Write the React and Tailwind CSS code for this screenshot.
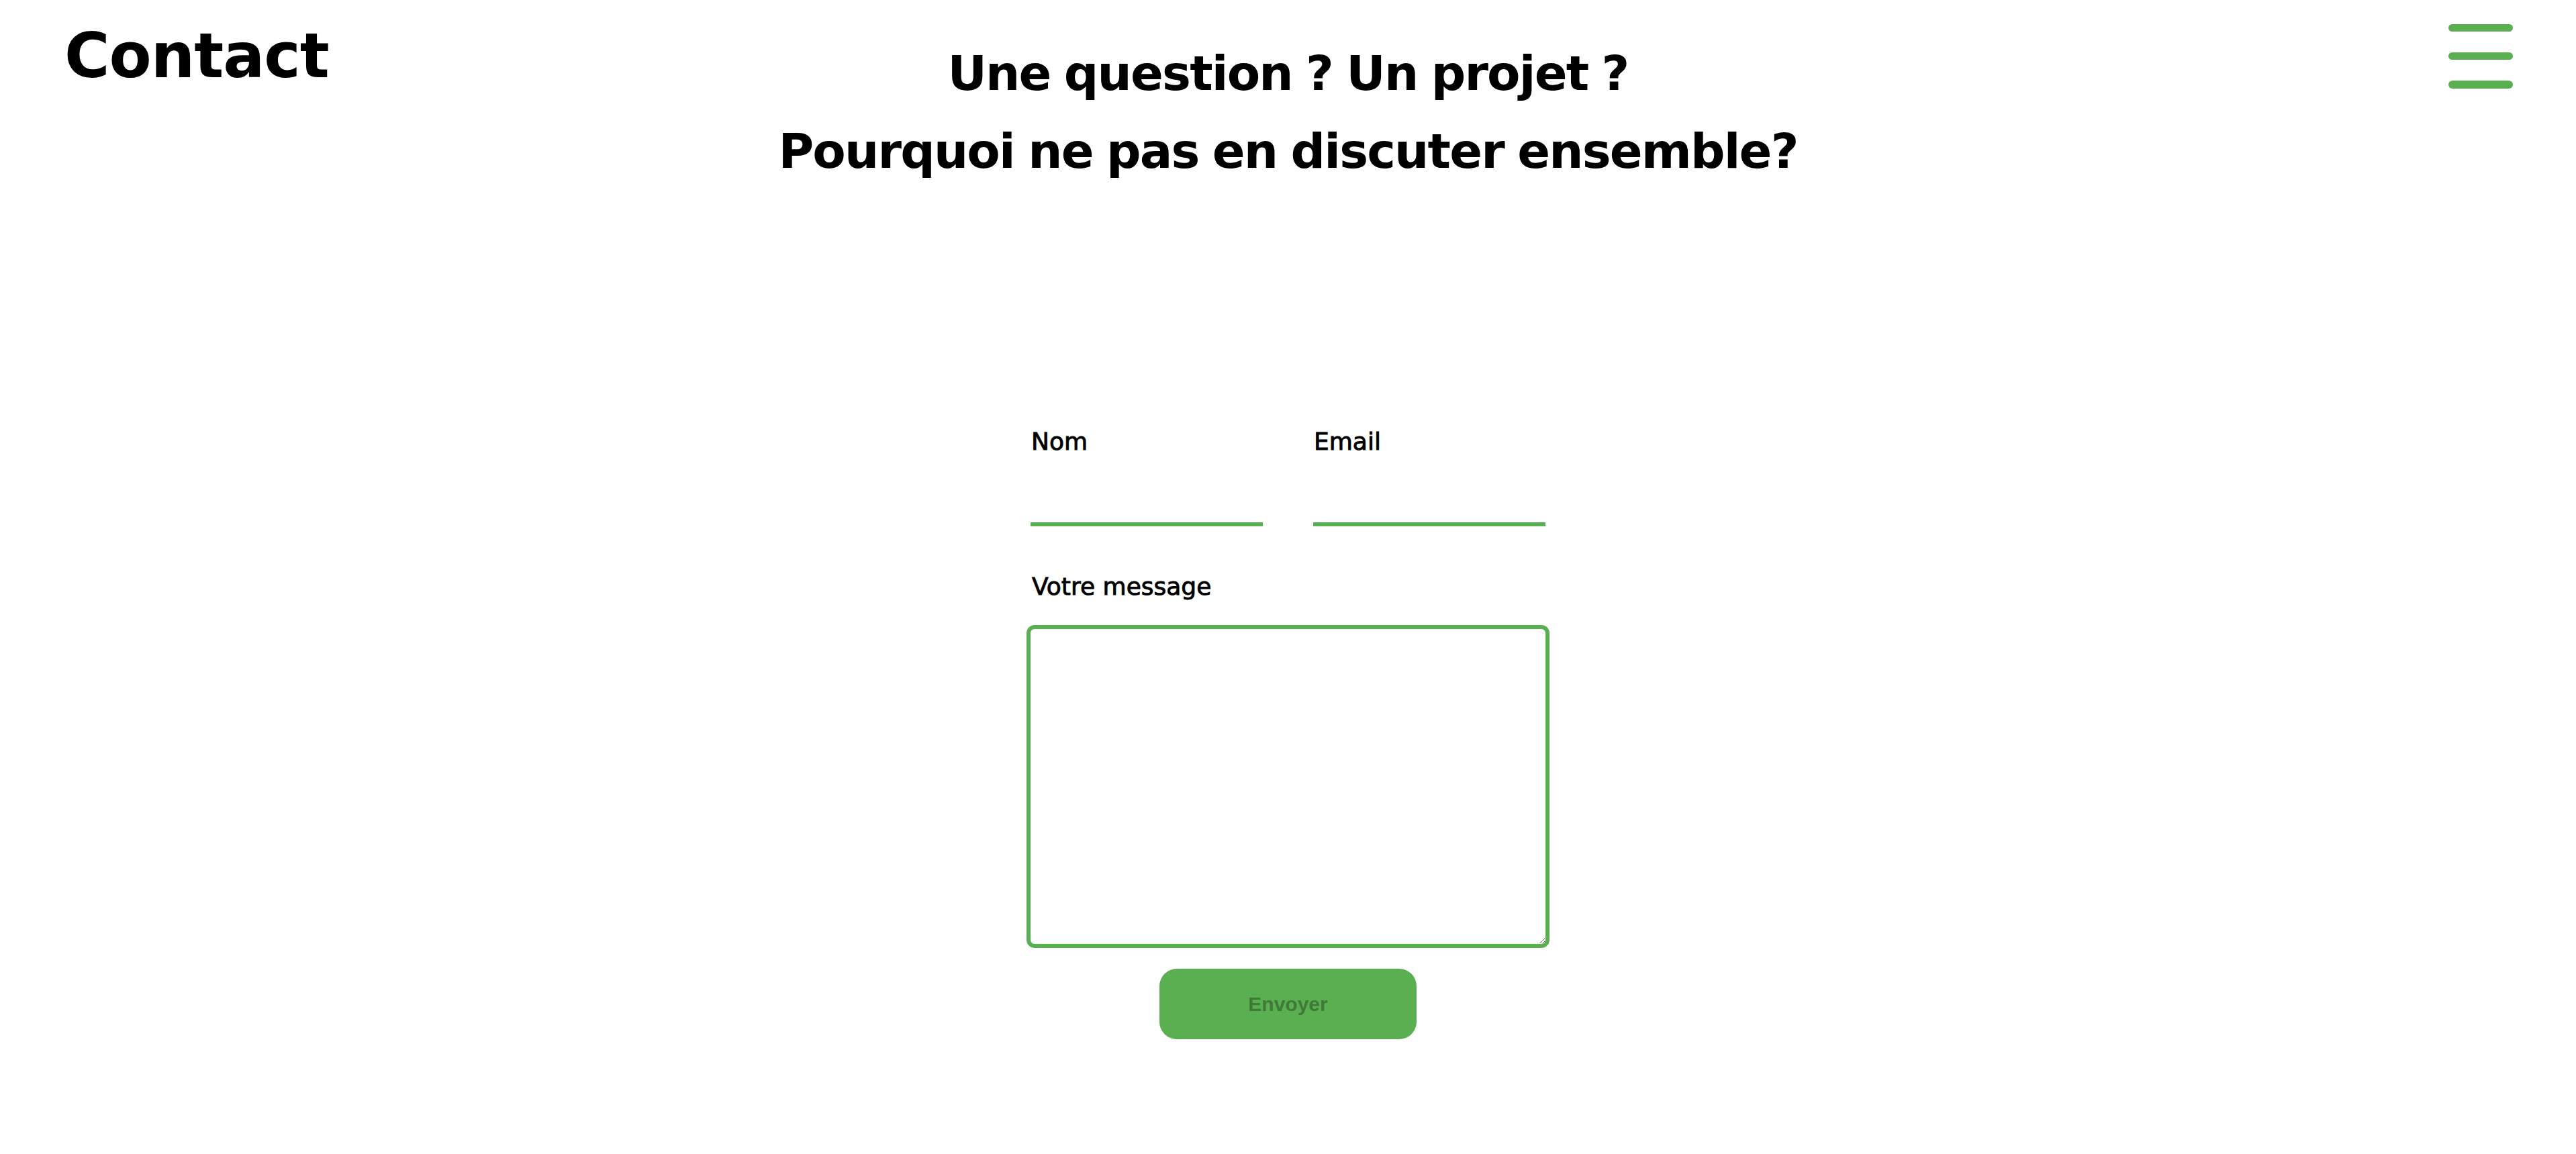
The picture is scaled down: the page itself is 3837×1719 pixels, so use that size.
import React from "react";

export default function App() {
  return (
    <div className="min-h-screen w-full bg-white text-black font-['DejaVu_Sans',sans-serif]">
      <header className="grid grid-cols-[1fr_auto_1fr] items-start">
        <h1 className="ml-[96px] mt-[38px] text-[92px] leading-[92px] font-bold tracking-[-1px]">
          Contact
        </h1>
        <h2 className="mt-[51px] text-center text-[72px] leading-[116px] font-bold tracking-[-1.8px] [word-spacing:-3px]">
          Une question ? Un projet ?
          <br />
          Pourquoi ne pas en discuter ensemble?
        </h2>
        <div className="justify-self-end mr-[94px] mt-[36px] flex w-[96px] flex-col gap-[31px]">
          <span className="block h-[11px] w-full rounded-full bg-[#5aaf50]" />
          <span className="block h-[11px] w-full rounded-full bg-[#5aaf50]" />
          <span className="block h-[12px] w-full rounded-full bg-[#5aaf50]" />
        </div>
      </header>

      <form className="mx-auto mt-[355px] flex w-[779px] flex-col items-center" onSubmit={(e) => e.preventDefault()}>
        <div className="flex w-full gap-[75px] px-[6px]">
          <div className="flex w-[346px] flex-col">
            <label className="pl-[1px] text-[36px] leading-[40px] [-webkit-text-stroke:0.9px_black]">Nom</label>
            <input
              type="text"
              className="mt-[46px] h-[60px] w-full border-0 border-b-[6px] border-[#5aaf50] bg-transparent outline-none"
            />
          </div>
          <div className="flex w-[346px] flex-col">
            <label className="pl-[1px] text-[36px] leading-[40px] [-webkit-text-stroke:0.9px_black]">Email</label>
            <input
              type="email"
              className="mt-[46px] h-[60px] w-full border-0 border-b-[6px] border-[#5aaf50] bg-transparent outline-none"
            />
          </div>
        </div>
        <label className="mt-[70px] w-full pl-[8px] text-[36px] leading-[40px] [-webkit-text-stroke:0.9px_black]">
          Votre message
        </label>
        <textarea className="mt-[37px] h-[481px] w-[779px] resize rounded-[12px] border-[6px] border-[#5aaf50] bg-white outline-none" />
        <button
          type="submit"
          className="mt-[31px] flex h-[105px] w-[383px] items-center justify-center rounded-[26px] bg-[#5aaf50] text-[30px] font-bold text-[#3f7a38] font-['Liberation_Sans',sans-serif]"
        >
          Envoyer
        </button>
      </form>
    </div>
  );
}
